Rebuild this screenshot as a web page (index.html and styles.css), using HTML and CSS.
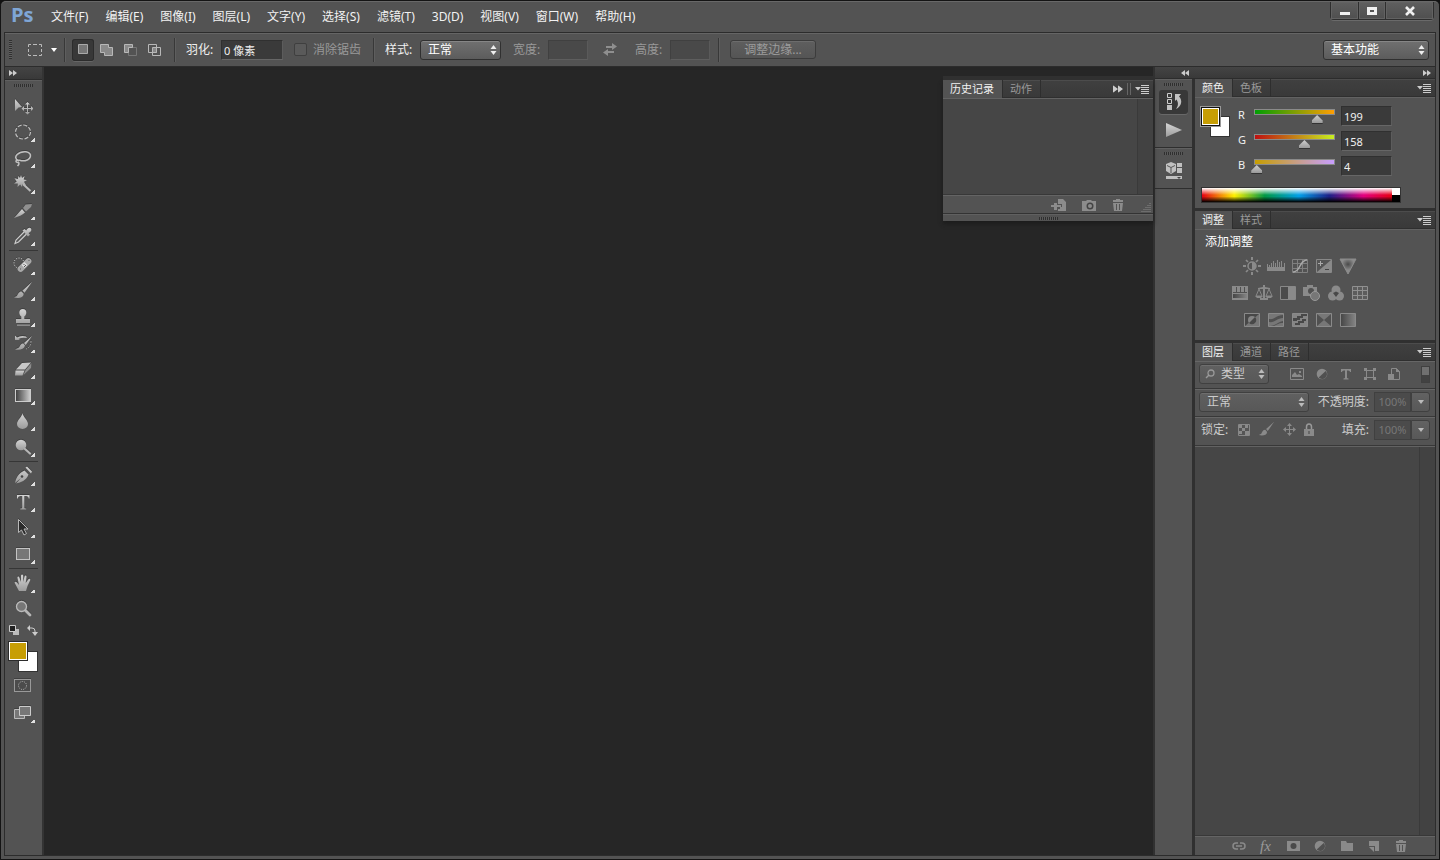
FILE: index.html
```html
<!DOCTYPE html>
<html lang="zh-CN">
<head>
<meta charset="utf-8">
<title>Ps</title>
<link rel="stylesheet" href="styles.css">
</head>
<body>
<svg class="defs" aria-hidden="true">
  <defs>
    <linearGradient id="metal" x1="0" y1="0" x2="0" y2="1"><stop offset="0" stop-color="#d4d4d4"/><stop offset="1" stop-color="#9c9c9c"/></linearGradient>
    <linearGradient id="ramp" x1="0" y1="0" x2="1" y2="0"><stop offset="0" stop-color="#3c3c3c"/><stop offset="1" stop-color="#d0d0d0"/></linearGradient>
    <linearGradient id="rampdim" x1="0" y1="0" x2="1" y2="0"><stop offset="0" stop-color="#454545"/><stop offset="1" stop-color="#858585"/></linearGradient>
    <radialGradient id="glow" cy="0.35" r="0.4"><stop offset="0" stop-color="#4a4a4a"/><stop offset="1" stop-color="#8c8c8c"/></radialGradient>
    <symbol id="updown" viewBox="0 0 7 10"><path d="M3.500 0 6.500 4H.5zM.5 6h6l-3 4z"/></symbol>
    <symbol id="fwd" viewBox="0 0 8 6"><path d="M0 0 4 3 0 6zM4 0 8 3 4 6z"/></symbol>
    <symbol id="back" viewBox="0 0 8 6"><path d="M4 0 0 3l4 3zM8 0 4 3l4 3z"/></symbol>
    <symbol id="flyout" viewBox="0 0 14 9"><path d="M0 2h6L3 5.500zM6 0h8v1H6zM6 2h8v1H6zM6 4h8v1H6zM6 6h8v1H6zM6 8h8v1H6z"/></symbol>
    <symbol id="down" viewBox="0 0 6 4"><path d="M0 0h6L3 4z"/></symbol>
    <symbol id="trash" viewBox="0 0 14 14"><path d="M5 1h4v1h3v2H2V2h3zM2 5h10l-1 8H3z"/><path d="M5.500 6v6M8.500 6v6" stroke="#535353" fill="none"/></symbol>
    <symbol id="half" viewBox="0 0 12 12"><circle cx="6" cy="6" r="5.300"/><path d="M2.700 9.500A4.500 4.500 0 0 0 9.700 3z" fill="#505050"/></symbol>
    <symbol id="brush" viewBox="0 0 20 20"><path d="M19 1 9.500 9.500l2 2.200zM8.600 10.400c-3 0-3.400 2.400-4.800 4.600L1 16.600c4.500.9 9.400.4 9.700-3.800z"/></symbol>
  </defs>
</svg>

<div class="app">
  <header class="titlebar">
    <div class="logo">Ps</div>
    <nav class="menu">
      <a href="#">文件(F)</a><a href="#">编辑(E)</a><a href="#">图像(I)</a><a href="#">图层(L)</a><a href="#">文字(Y)</a><a href="#">选择(S)</a><a href="#">滤镜(T)</a><a href="#">3D(D)</a><a href="#">视图(V)</a><a href="#">窗口(W)</a><a href="#">帮助(H)</a>
    </nav>
    <div class="winbtns">
      <button type="button" aria-label="最小化"><svg width="12" height="10"><path d="M1 6h10v3H1z"/></svg></button>
      <button type="button" aria-label="最大化"><svg width="12" height="10"><path d="M1 1h10v8H1zM4 4v2h4V4z" fill-rule="evenodd"/></svg></button>
      <button type="button" class="close" aria-label="关闭"><svg width="12" height="10"><path d="m2 1 8 8M10 1 2 9" stroke="#f0f0f0" stroke-width="2.600"/></svg></button>
    </div>
  </header>

  <div class="frame">
    <div class="options">
      <span class="vgrip"></span>
      <button type="button" class="preset" aria-label="矩形选框工具">
        <svg width="16" height="14"><path d="M1.500 4V1.500H4M6 1.500h4M12 1.500h2.500V4M14.500 6v3M14.500 11v1.500H12M10 12.500H6M4 12.500H1.500V11M1.500 9V6" stroke="#bbb" fill="none"/></svg>
        <svg class="lit" width="6" height="4"><use href="#down"/></svg>
      </button>
      <span class="sep first"></span>
      <div class="modes">
        <button type="button" class="on" aria-label="新选区"><svg width="14" height="14"><path d="M2.500 1.500h9v9h-9z" fill="#777" stroke="#aaa"/></svg></button>
        <button type="button" aria-label="添加到选区"><svg width="14" height="14"><path d="M.5 1.500h8v3h4v8h-8v-3h-4z" fill="#8a8a8a" stroke="#b8b8b8"/></svg></button>
        <button type="button" aria-label="从选区减去"><svg width="14" height="14"><path d="M4.500 4.500h8v8h-8z" fill="none" stroke="#777"/><path d="M.5 1.500h8v3h-4v5h-4z" fill="#8a8a8a" stroke="#b8b8b8"/></svg></button>
        <button type="button" aria-label="与选区交叉"><svg width="14" height="14"><path d="M4 5h5v5H4z" fill="#888"/><path d="M.5 1.500h8v8h-8zM4.500 4.500h8v8h-8z" fill="none" stroke="#b8b8b8"/></svg></button>
      </div>
      <span class="sep near"></span>
      <label class="lbl" for="feather">羽化:</label>
      <input class="field feather" id="feather" type="text" value="0 像素">
      <input class="check" id="alias" type="checkbox" disabled>
      <label class="off" for="alias">消除锯齿</label>
      <span class="sep tail-sep"></span>
      <label class="lbl" for="mode">样式:</label>
      <span class="pick mode"><select id="mode"><option>正常</option></select><svg width="7" height="10"><use href="#updown"/></svg></span>
      <label class="lbl off wide" for="w">宽度:</label>
      <input class="field size" id="w" type="text" disabled>
      <button type="button" class="swapwh" aria-label="交换宽高" disabled><svg width="14" height="13"><path d="M3 3h6V0l5 3.500L9 7V5H3zM11 8H5V6L0 9.500 5 13v-3h6z"/></svg></button>
      <label class="lbl off" for="h">高度:</label>
      <input class="field size" id="h" type="text" disabled>
      <span class="sep near"></span>
      <button type="button" class="refine" disabled>调整边缘...</button>
      <span class="pick workspace-pick"><select aria-label="工作区"><option>基本功能</option></select><svg width="7" height="10"><use href="#updown"/></svg></span>
    </div>

    <div class="workspace">
      <aside class="toolbar">
        <div class="strip"><button type="button" aria-label="展开"><svg width="8" height="6"><use href="#fwd"/></svg></button></div>
        <div class="tools">
          <span class="grip"></span>
          <button type="button" class="solo" aria-label="移动"><svg viewBox="0 0 20 20"><path d="M2 3v12l3.500-3.500L9 11z"/><path d="M14.500 6 17 8.500h-2V12h3v-2l2.500 2.500L18 15v-2h-3v3h2l-2.500 2.500L12 16h2v-3h-3v2l-2.500-2.500L11 10v2h3V8.500h-2z"/></svg></button>
          <button type="button" aria-label="椭圆选框"><svg viewBox="0 0 20 20"><ellipse cx="10" cy="10" rx="7.500" ry="7" fill="none" stroke="#c0c0c0" stroke-width="1.200" stroke-dasharray="4 1.700"/></svg></button>
          <button type="button" aria-label="套索"><svg viewBox="0 0 20 20"><path d="M5 12.500C-1 9 6 3 13 3.800c7 .7 6 9.200-4.500 9-2-.2-4-1.500-5-.5-1.500 1.500 1 3 2.500 1.500M5 14c2 1 .5 3-.5 4" fill="none" stroke="#c0c0c0" stroke-width="1.600"/></svg></button>
          <button type="button" aria-label="魔棒"><svg viewBox="0 0 20 20"><path d="m8 1 1 3 2.500-2-.8 3.500L14 6l-3 1.700L13 11l-3.500-1L9 13l-1.800-2.500L4.500 13l.3-3.400L1 9.500l2.700-2L1.500 4.300 5 5l.3-3L7 4z"/><path d="m10 10 7.500 7" stroke="#b8b8b8" stroke-width="2.200"/></svg></button>
          <button type="button" aria-label="切片"><svg viewBox="0 0 20 20"><path d="M1 18 9 9l3 3.500c-3 2.500-6 4-11 5.500z"/><path d="m10 8 2.500-3.500L19 4l-1 3-5 4.500z" fill="#909090"/></svg></button>
          <button type="button" aria-label="吸管"><svg viewBox="0 0 20 20"><path d="m11 6-8 8-1 3.500L5.500 16l8-8" fill="#555" stroke="#ccc" stroke-width="1.200"/><path d="m9.500 4.500 2-1.500 1.800 1.500C14.500 1.500 17 1 18 2.500s0 3.500-2.500 4.500L17 8.800l-2 1.700z"/></svg></button>
          <span class="rule"></span>
          <button type="button" aria-label="修复画笔"><svg viewBox="0 0 20 20"><circle cx="6" cy="8" r="5" fill="none" stroke="#ddd" stroke-dasharray="1 1.500"/><rect x="3" y="7" width="17" height="6" rx="3" transform="rotate(-45 11.500 10)" fill="#a8a8a8"/><path d="m8.500 10 3-3 3 3-3 3z" fill="#ddd"/><path d="M10.500 9.500h1M12 10.500h1M11 11.500h1M7 14h1M15.500 5.500h1" stroke="#555"/></svg></button>
          <button type="button" aria-label="画笔"><svg viewBox="0 0 20 20"><use href="#brush"/></svg></button>
          <button type="button" aria-label="图章"><svg viewBox="0 0 20 20"><path d="M8.300 9.500C6.500 8 6.300 6.500 6.300 5.500a3.500 3.500 0 0 1 7 0c0 1-.2 2.500-2 4V12H17v4H3v-4h5.300zM4 17.500h13v1.200H4z"/></svg></button>
          <button type="button" aria-label="历史记录画笔"><svg viewBox="0 0 20 20"><path d="m19 3-8 7 1.700 2zM10.500 10.500c-3 0-3 2-4.500 4l-4 2c4.500 1 9 0 10-4z"/><path d="M2 7V2.500L4 4.500Q8 2 13 3.500L14 5Q9 4 5.500 6L7 7z"/><path d="M18 8q0 6-5 8" fill="none" stroke="#aaa" stroke-dasharray="1.500 1.500"/></svg></button>
          <button type="button" aria-label="橡皮擦"><svg viewBox="0 0 20 20"><path d="m9 4 9-.5-6 7H3z" fill="#c8c8c8"/><path d="M2.500 11.500h9l-2 5H2z"/><path d="m12.500 11 6-7-.5 5-7.500 7z" fill="#8c8c8c"/></svg></button>
          <button type="button" aria-label="渐变"><svg viewBox="0 0 20 20"><rect x="2.500" y="4.500" width="15" height="12" fill="url(#ramp)" stroke="#ccc"/></svg></button>
          <button type="button" aria-label="模糊"><svg viewBox="0 0 20 20"><path d="M9.500 2c.5 4 5.500 7 5.500 11a5.500 5 0 0 1-11 0C4 9 9 6 9.500 2z"/></svg></button>
          <button type="button" aria-label="减淡"><svg viewBox="0 0 20 20"><circle cx="8" cy="8" r="5.300"/><path d="m12 12 5 4.500" stroke="#b5b5b5" stroke-width="2.200" stroke-linecap="round"/></svg></button>
          <span class="rule"></span>
          <button type="button" aria-label="钢笔"><svg viewBox="0 0 20 20"><path d="m12.500 1.500 1.500-1 5 5-1 2zM2 17C3 12 5 7.500 11.500 4.500l4 4C13 15 8 16 3 17.500L8 12z"/><circle cx="9" cy="10.500" r="1.300" fill="#444"/></svg></button>
          <button type="button" aria-label="横排文字"><svg viewBox="0 0 20 20"><path d="M4 3h12.500v3.500h-.8C15.500 4.600 14.500 4 11.300 4v11c0 1.200.4 1.500 1.900 1.500v1H7.300v-1c1.500 0 1.900-.3 1.900-1.500V4C6 4 5 4.600 4.800 6.500H4z"/></svg></button>
          <button type="button" aria-label="路径选择"><svg viewBox="0 0 20 20"><path d="M5.500 1.500v13l3-2.500 2.500 5 2.500-1.500-2.500-4.500h4z" fill="#2b2b2b" stroke="#b8b8b8"/></svg></button>
          <button type="button" aria-label="矩形"><svg viewBox="0 0 20 20"><rect x="3.500" y="4.500" width="13" height="11" fill="#777" stroke="#c4c4c4"/></svg></button>
          <span class="rule"></span>
          <button type="button" aria-label="抓手"><svg viewBox="0 0 20 20"><path d="M6 18 2 10.500C.8 8.500 2.800 8 4 9.500L6 12 4.500 5C4 3 6 3 6.500 4.700L8 9V3c0-2 2.200-2 2.200 0v6l1.300-5.500c.5-1.800 2.300-1.200 2 .6L12.700 10l2.500-3.500c1-1.500 2.600-.6 1.900 1L14.500 13 13 18z"/></svg></button>
          <button type="button" class="solo" aria-label="缩放"><svg viewBox="0 0 20 20"><path d="m12.500 11.500 4.500 4.500" stroke="#b5b5b5" stroke-width="2.800" stroke-linecap="round"/><circle cx="8.500" cy="7.500" r="5" fill="#777" stroke="#bbb" stroke-width="1.300"/></svg></button>
          <div class="mini">
            <button type="button" aria-label="默认颜色"><svg width="11" height="11"><path d="M4 4h6v6H4z" fill="#bbb"/><path d="M.5.5h6v6h-6z" fill="#222" stroke="#ccc"/></svg></button>
            <button type="button" aria-label="切换颜色"><svg width="11" height="11"><path d="M2 3h3q3 0 3 3v2" fill="none" stroke="#ccc"/><path d="M3 0v6L0 3zM5 7h6l-3 4z" fill="#ccc"/></svg></button>
          </div>
          <div class="swatches large"><button type="button" class="fg" aria-label="前景色"></button><button type="button" class="bg" aria-label="背景色"></button></div>
          <button type="button" class="solo mask" aria-label="快速蒙版"><svg viewBox="0 0 20 20"><rect x="1.500" y="3.500" width="16" height="12" fill="#4c4c4c" stroke="#999"/><circle cx="9.500" cy="9.500" r="4" fill="none" stroke="#bbb" stroke-dasharray="1 1.200"/></svg></button>
          <button type="button" aria-label="屏幕模式"><svg viewBox="0 0 20 20"><path d="M1.500 6.500h10v9h-10z" fill="#777" stroke="#bbb"/><path d="M6.500 3.500h11v9h-11z" fill="#777" stroke="#ccc"/></svg></button>
        </div>
      </aside>

      <main class="canvas">
        <section class="history">
          <div class="tabs">
            <button type="button" class="tab on">历史记录</button><button type="button" class="tab">动作</button>
            <span class="tail"><svg width="10" height="8" viewBox="0 0 8 6"><use href="#fwd"/></svg><i></i><svg width="14" height="9"><use href="#flyout"/></svg></span>
          </div>
          <div class="list"></div>
          <div class="histfoot">
            <button type="button" aria-label="从当前状态创建新文档"><svg width="16" height="14"><path d="M7 1h5l3 3v9H7v-2h2V9h2V6H7zM3 5h3v2h4v2H6v3H3V9H0V7h3z"/></svg></button>
            <button type="button" aria-label="创建新快照"><svg width="16" height="14"><path d="M1 3h4l1-1h4l1 1h4v10H1z"/><circle cx="9" cy="8" r="3.500" fill="#444"/><circle cx="9" cy="8" r="2"/></svg></button>
            <button type="button" aria-label="删除当前状态"><svg width="14" height="14"><use href="#trash"/></svg></button>
            <svg class="resize" width="10" height="10"><path d="M9 0v10M7 2v8M5 4v6M3 6v4M1 8v2" stroke="#888" stroke-dasharray="1 1" fill="none"/></svg>
          </div>
          <div class="handle"><span class="grip"></span></div>
        </section>
      </main>

      <aside class="side">
        <div class="strip both">
          <button type="button" aria-label="展开面板"><svg width="8" height="6"><use href="#back"/></svg></button>
          <button type="button" aria-label="折叠面板"><svg width="8" height="6"><use href="#fwd"/></svg></button>
        </div>
        <div class="columns">
          <div class="dock">
            <div class="dockgroup">
              <span class="grip"></span>
              <button type="button" class="on" aria-label="历史记录面板"><svg width="18" height="18"><path d="M2.500.5h4v4h-4zM2.500 6.500h4v4h-4z" fill="none" stroke="#ccc"/><path d="M2 12h5v5H2zM10 1h6l-2 2.500c4 4 2.500 10-3 12.500 3-4 2-7 .5-9.500L10 8z"/></svg></button>
              <button type="button" aria-label="动作面板"><svg width="18" height="18"><path d="M1 2v14l16-7z" fill="url(#metal)"/></svg></button>
            </div>
            <div class="dockgroup">
              <span class="grip"></span>
              <button type="button" aria-label="属性面板"><svg width="18" height="18"><path d="m6 0 5 2v7l-5 3-5-3V2z"/><path d="m2 3.500 4 2 4-2M6 5.500V11" stroke="#555" fill="none"/><path d="M12 1h5v4h-5zM12 6h5v5h-5zM1 14h16v3H1z"/><path d="M12 15h4l-2 2z" fill="#444"/></svg></button>
            </div>
          </div>

          <div class="panels">
            <section class="panel color">
              <div class="tabs"><button type="button" class="tab on">颜色</button><button type="button" class="tab">色板</button><span class="tail"><svg width="14" height="9"><use href="#flyout"/></svg></span></div>
              <div class="body">
                <div class="mixer">
                  <div class="swatches"><button type="button" class="fg" aria-label="前景色"></button><button type="button" class="bg" aria-label="背景色"></button></div>
                  <div class="channels">
                    <div class="channel"><label for="r">R</label><div class="slide"><div class="bar red"></div><input id="r" type="range" min="0" max="255" value="199"></div><input class="field" type="text" value="199" aria-label="R 值"></div>
                    <div class="channel"><label for="g">G</label><div class="slide"><div class="bar green"></div><input id="g" type="range" min="0" max="255" value="158"></div><input class="field" type="text" value="158" aria-label="G 值"></div>
                    <div class="channel"><label for="b">B</label><div class="slide"><div class="bar blue"></div><input id="b" type="range" min="0" max="255" value="4"></div><input class="field" type="text" value="4" aria-label="B 值"></div>
                  </div>
                </div>
                <div class="spectrum"><div class="hues"></div><div class="bw"></div></div>
              </div>
            </section>

            <section class="panel adjust">
              <div class="tabs"><button type="button" class="tab on">调整</button><button type="button" class="tab">样式</button><span class="tail"><svg width="14" height="9"><use href="#flyout"/></svg></span></div>
              <div class="body">
                <div class="title">添加调整</div>
                <div class="presets">
                  <button type="button" aria-label="亮度/对比度"><svg viewBox="0 0 18 18"><circle cx="9" cy="9" r="4" fill="none" stroke="#8a8a8a" stroke-width="1.500"/><path d="M9 5a4 4 0 0 1 0 8zM8 0h2v3H8zM8 15h2v3H8zM0 8h3v2H0zM15 8h3v2h-3z"/><path d="m3 3 2 2M13 13l2 2M3 15l2-2M13 5l2-2" stroke="#8a8a8a" stroke-width="1.700"/></svg></button>
                  <button type="button" aria-label="色阶"><svg viewBox="0 0 18 18"><path d="M0 10h18v4H0z"/><path d="M.5 7v4M2.500 8v3M4.500 6v5M6.500 4v7M8.500 6v5M10.500 3v8M12.500 5v6M14.500 4v7M17.500 6v5" stroke="#8a8a8a"/></svg></button>
                  <button type="button" aria-label="曲线"><svg viewBox="0 0 18 18"><path d="M1.500 2.500h15v13h-15zM6.500 2.500v13M11.500 2.500v13M1.500 6.500h15M1.500 11.500h15" fill="none" stroke="#808080"/><path d="M2 15c8 0 6-12 14-12" fill="none" stroke="#aaa" stroke-width="1.500"/></svg></button>
                  <button type="button" aria-label="曝光度"><svg viewBox="0 0 18 18"><path d="M1.500 2.500h15v13h-15z" fill="#555" stroke="#888"/><path d="M2 15 16 3v12z"/><path d="M5.500 4v5M3 6.500h5" stroke="#aaa"/><path d="M10 12.500h4" stroke="#444"/></svg></button>
                  <button type="button" aria-label="自然饱和度"><svg viewBox="0 0 18 18"><path d="M1 2h16L9 17z" fill="url(#glow)" stroke="#8c8c8c"/></svg></button>
                </div>
                <div class="presets">
                  <button type="button" aria-label="色相/饱和度"><svg viewBox="0 0 18 18"><path d="M1 2h16v14H1z"/><path d="M5.500 3v5M9.500 3v5M13.500 3v5M2 8.500h14" stroke="#505050"/><path d="M2 10h14v4H2z" fill="url(#rampdim)"/></svg></button>
                  <button type="button" aria-label="色彩平衡"><svg viewBox="0 0 18 18"><path d="M8 1h2v2l5 1v1h-5v9h3v2H5v-2h3V5H3V4l5-1z"/><path d="M4 5 1 12h6zM14 5l-3 7h6z" fill="none" stroke="#888"/><path d="M0 12h8l-2 2H2zM10 12h8l-2 2h-4z"/></svg></button>
                  <button type="button" aria-label="黑白"><svg viewBox="0 0 18 18"><path d="M1.500 2.500h15v13h-15z" fill="#4b4b4b" stroke="#888"/><path d="M9 3h7v12H9z"/></svg></button>
                  <button type="button" aria-label="照片滤镜"><svg viewBox="0 0 18 18"><path d="M0 3h4V1h6v2h4v9H0z"/><circle cx="8" cy="7" r="3" fill="#505050"/><circle cx="12" cy="12" r="4.500" fill="#777" stroke="#999"/></svg></button>
                  <button type="button" aria-label="通道混合器"><svg viewBox="0 0 18 18"><circle cx="9" cy="6" r="4.500"/><circle cx="5.500" cy="12" r="4.500"/><circle cx="12.500" cy="12" r="4.500"/><path d="m6 9 3-1.500L12 9l-3 4z" fill="#484848"/></svg></button>
                  <button type="button" aria-label="颜色查找"><svg viewBox="0 0 18 18"><path d="M1.500 2.500h15v13h-15z" fill="#5c5c5c"/><path d="M1.500 2.500h15v13h-15zM6.500 2.500v13M11.500 2.500v13M1.500 6.500h15M1.500 11.500h15" fill="none" stroke="#909090"/></svg></button>
                </div>
                <div class="presets">
                  <button type="button" aria-label="反相"><svg viewBox="0 0 18 18"><path d="M1.500 2.500h15v13h-15z" fill="#777" stroke="#8a8a8a"/><path d="M2 15 16 3H2z" fill="#484848"/><circle cx="9" cy="9" r="4" fill="#858585"/><path d="M12 6a4 4 0 0 1-6 6z" fill="#484848"/></svg></button>
                  <button type="button" aria-label="色调分离"><svg viewBox="0 0 18 18"><path d="M1.500 2.500h15v13h-15z" fill="#777" stroke="#8a8a8a"/><path d="M2 8c6 1 7-4 14-4v3c-6 0-8 5-14 4zM2 15c7 0 8-4 14-5v2c-5 0-6 2-9 3z" fill="#505050"/></svg></button>
                  <button type="button" aria-label="阈值"><svg viewBox="0 0 18 18"><path d="M1.500 2.500h15v13h-15z" fill="#858585" stroke="#8a8a8a"/><path d="M2 9V7h4V5h4V3h6v2h-4v2H9v2H6v1H2zM4 14v-2h3v-2h4V8h4v2h-2v2h-4v2z" fill="#484848"/></svg></button>
                  <button type="button" aria-label="可选颜色"><svg viewBox="0 0 18 18"><path d="M1.500 2.500h15v13h-15z" fill="#777" stroke="#8a8a8a"/><path d="m2 3 7 6-7 6zM16 3 9 9l7 6z" fill="#505050"/></svg></button>
                  <button type="button" aria-label="渐变映射"><svg viewBox="0 0 18 18"><path d="M1.500 2.500h15v13h-15z" fill="url(#rampdim)" stroke="#8a8a8a"/></svg></button>
                </div>
              </div>
            </section>

            <section class="panel layers">
              <div class="tabs"><button type="button" class="tab on">图层</button><button type="button" class="tab">通道</button><button type="button" class="tab">路径</button><span class="tail"><svg width="14" height="9"><use href="#flyout"/></svg></span></div>
              <div class="layerrow">
                <span class="pick dim kind"><svg class="lens" width="10" height="10"><circle cx="6" cy="4" r="3" fill="none" stroke="#999" stroke-width="1.300"/><path d="M4 6 1 9" stroke="#999" stroke-width="1.500"/></svg><select aria-label="筛选类型"><option>类型</option></select><svg width="7" height="10"><use href="#updown"/></svg></span>
                <div class="filters">
                  <button type="button" aria-label="像素图层"><svg width="14" height="12"><path d="M.5.500h13v11H.5z" fill="none" stroke="#8a8a8a"/><path d="M2 9V7l3-3 2 3 2-1 3 2v1z"/><path d="M9 3h2v2H9z"/></svg></button>
                  <button type="button" aria-label="调整图层"><svg width="12" height="12"><use href="#half"/></svg></button>
                  <button type="button" aria-label="文字图层"><svg width="12" height="12"><path d="M1 1h10v3h-1c0-1-1-1.500-3-1.500V10l1.500.5v1h-5v-1L5 10V2.500C3 2.500 2 3 2 4H1z"/></svg></button>
                  <button type="button" aria-label="形状图层"><svg width="12" height="12"><path d="M2.500 2.500h7v7h-7z" fill="none" stroke="#8a8a8a"/><path d="M0 0h3v3H0zM9 0h3v3H9zM0 9h3v3H0zM9 9h3v3H9z"/></svg></button>
                  <button type="button" aria-label="智能对象"><svg width="12" height="13"><path d="M3.500 6V.5h5l3 3v8H6" fill="none" stroke="#8a8a8a"/><path d="M8 0v4h4zM0 6h6v6H0z"/></svg></button>
                </div>
                <button type="button" class="switch" aria-label="打开或关闭图层过滤"></button>
              </div>
              <div class="layerrow">
                <span class="pick dim blend"><select aria-label="混合模式"><option>正常</option></select><svg width="7" height="10"><use href="#updown"/></svg></span>
                <label class="push" for="opacity">不透明度:</label>
                <span class="percent"><input id="opacity" type="text" value="100%" disabled><button type="button" aria-label="不透明度滑块"><svg width="6" height="4"><use href="#down"/></svg></button></span>
              </div>
              <div class="layerrow last">
                <span class="lock">锁定:</span>
                <div class="locks">
                  <button type="button" aria-label="锁定透明像素"><svg width="12" height="12"><path d="M.5.5h11v11H.5z" fill="#555" stroke="#888"/><path d="M1 1h3v3H1zM7 1h3v3H7zM4 4h3v3H4zM1 7h3v3H1zM7 7h4v4H7z"/></svg></button>
                  <button type="button" aria-label="锁定图像像素"><svg width="17" height="17" viewBox="0 0 20 20"><use href="#brush"/></svg></button>
                  <button type="button" aria-label="锁定位置"><svg width="13" height="13"><path d="M6.500 0 9 3H7v3h3V4l3 2.500L10 9V7H7v3h2l-2.500 3L4 10h2V7H3v2L0 6.500 3 4v2h3V3H4z"/></svg></button>
                  <button type="button" aria-label="锁定全部"><svg width="10" height="13"><path d="M2.500 6V4a2.500 3 0 0 1 5 0v2" fill="none" stroke="#999" stroke-width="1.500"/><path d="M0 6h10v7H0z"/><path d="M4.500 8h1v3h-1z" fill="#444"/></svg></button>
                </div>
                <label class="push" for="fill">填充:</label>
                <span class="percent"><input id="fill" type="text" value="100%" disabled><button type="button" aria-label="填充滑块"><svg width="6" height="4"><use href="#down"/></svg></button></span>
              </div>
              <div class="list"></div>
              <div class="layerfoot">
                <button type="button" aria-label="链接图层"><svg width="14" height="14"><path d="M6 4H4a3 3 0 0 0 0 6h2M8 4h2a3 3 0 0 1 0 6H8M4 7h6" fill="none" stroke="#8a8a8a" stroke-width="1.500"/></svg></button>
                <button type="button" class="fx" aria-label="图层样式">fx</button>
                <button type="button" aria-label="图层蒙版"><svg width="14" height="14"><path d="M1 2h13v10H1z"/><circle cx="7.500" cy="7" r="3" fill="#4a4a4a"/></svg></button>
                <button type="button" aria-label="新调整图层"><svg width="12" height="12"><use href="#half"/></svg></button>
                <button type="button" aria-label="新建组"><svg width="14" height="14"><path d="M1 2h5l1 2h6v8H1z"/></svg></button>
                <button type="button" aria-label="新建图层"><svg width="14" height="14"><path d="M2 2h10v10H8V7H2zM2 8h5v5z"/></svg></button>
                <button type="button" aria-label="删除图层"><svg width="14" height="14"><use href="#trash"/></svg></button>
              </div>
            </section>
          </div>
        </div>
      </aside>
    </div>
  </div>
</div>
</body>
</html>
```
FILE: styles.css
```css
* { box-sizing: border-box; }

html, body { height: 100%; }

body {
  margin: 0;
  background: #111;
  color: #f0f0f0;
  font: 12px/16px "Noto Sans", "Noto Sans CJK SC", sans-serif;
}

button, input, select {
  margin: 0;
  padding: 0;
  border: 0;
  background: none;
  color: inherit;
  font: inherit;
}

button {
  display: flex;
  align-items: center;
  justify-content: center;
  flex: none;
}

svg { display: block; flex: none; fill: #c0c0c0; }
.defs { position: absolute; width: 0; height: 0; }

.app {
  display: flex;
  flex-direction: column;
  min-height: 100vh;
  background: #535353;
  border: 1px solid #141414;
  border-radius: 6px 6px 0 0;
}

/* Title bar */
.titlebar {
  display: flex;
  align-items: center;
  height: 31px;
  padding: 0 5px 0 10px;
  border-top: 1px solid #686868;
  border-radius: 5px 5px 0 0;
}
.logo {
  width: 40px;
  padding-bottom: 4px;
  color: #7fa6d6;
  font: bold 20px/24px "Open Sans", sans-serif;
}
.menu { display: flex; gap: 17px; }
.menu a { color: #f2f2f2; text-decoration: none; white-space: nowrap; }
.winbtns {
  display: flex;
  align-self: flex-start;
  margin-left: auto;
  border: 1px solid #2e2e2e;
  border-top: 0;
  border-radius: 0 0 4px 4px;
  box-shadow: 0 1px 0 #6a6a6a;
}
.winbtns button {
  width: 27px;
  height: 17px;
  background: linear-gradient(#5f5f5f, #4f4f4f);
  box-shadow: inset 0 0 0 1px #626262;
}
.winbtns button + button { border-left: 1px solid #2e2e2e; }
.winbtns .close { width: 48px; }
.winbtns svg { fill: #f0f0f0; }

.frame {
  display: flex;
  flex: 1;
  flex-direction: column;
  margin: 0 3px 3px;
  border: 1px solid #2c2c2c;
}

/* Options bar */
.options {
  display: flex;
  align-items: center;
  height: 34px;
  padding: 0 6px 0 4px;
  border-bottom: 1px solid #2c2c2c;
  box-shadow: inset 0 1px 0 #656565;
  white-space: nowrap;
}
.vgrip {
  width: 3px;
  height: 19px;
  margin-right: 8px;
  background: repeating-linear-gradient(#303030 0 1px, #606060 1px 2px);
}
.preset { gap: 8px; padding: 0 5px 0 7px; }
.lit { fill: #fff; }
.sep {
  width: 2px;
  height: 24px;
  margin: 0 10px;
  background: linear-gradient(90deg, #383838 50%, #5e5e5e 50%);
}
.sep.first { margin: 0 6px 0 2px; }
.sep.near { margin-left: 8px; }
.sep.tail-sep { margin-left: 12px; }
.modes { display: flex; gap: 2px; }
.modes button { width: 22px; height: 22px; border-radius: 3px; }
.modes .on { background: #383838; box-shadow: inset 0 0 0 1px #2c2c2c, 0 1px 0 #666; }
.lbl { width: 28px; margin-right: 7px; }
.off { color: #999; }
.wide { margin-left: 12px; }

.field {
  height: 20px;
  padding: 0 2px;
  background: #3a3a3a;
  border: 1px solid #303030;
  border-bottom-color: #666;
  border-right-color: #5c5c5c;
}
.field:disabled { background: #494949; border-color: #404040 #5a5a5a #5e5e5e #404040; }
.feather { width: 62px; margin-right: 11px; font-size: 11px; }
.size { width: 40px; }
.check {
  width: 13px;
  height: 13px;
  margin-right: 6px;
  appearance: none;
  background: #5a5a5a;
  border: 1px solid #3f3f3f;
  border-radius: 2px;
}
.swapwh { margin: 0 18px 0 15px; }
.swapwh svg { fill: #8f8f8f; }
.refine {
  width: 86px;
  height: 19px;
  background: linear-gradient(#5e5e5e, #555);
  border: 1px solid #3c3c3c;
  border-radius: 3px;
  box-shadow: inset 0 1px 0 #6c6c6c;
  color: #9c9c9c;
}

.pick { position: relative; display: flex; height: 20px; }
.pick select {
  width: 100%;
  padding: 0 16px 0 7px;
  appearance: none;
  background: linear-gradient(#707070, #5c5c5c);
  border: 1px solid #303030;
  border-radius: 3px;
  box-shadow: inset 0 1px 0 #868686;
  color: #fff;
  line-height: 16px;
}
.pick > svg { position: absolute; top: 5px; right: 4px; fill: #eee; pointer-events: none; }
.mode { width: 81px; }
.workspace-pick { width: 106px; margin-left: auto; }
.dim select {
  background: linear-gradient(#606060, #585858);
  border-color: #404040;
  box-shadow: inset 0 1px 0 #6e6e6e;
  color: #ccc;
}

/* Workspace */
.workspace { display: flex; flex: 1; }
.strip {
  display: flex;
  align-items: center;
  height: 13px;
  padding: 0 4px;
  background: linear-gradient(#444, #393939);
  border-bottom: 1px solid #2c2c2c;
}
.strip svg { fill: #ccc; }
.grip {
  width: 19px;
  height: 3px;
  background: repeating-linear-gradient(90deg, #2f2f2f 0 1px, #5a5a5a 1px 2px);
}

.toolbar {
  width: 39px;
  border-right: 2px solid #343434;
}
.tools {
  display: flex;
  flex-direction: column;
  align-items: center;
  padding: 3px 1px 0 0;
  border-top: 1px solid #606060;
}
.tools > .grip { margin-bottom: 6px; }
.tools > button { position: relative; width: 36px; height: 26px; }
.tools > button svg {
  width: 20px;
  height: 20px;
  fill: url(#metal);
  filter: drop-shadow(0 -1px 0 #404040);
}
.tools > button::after {
  content: "";
  position: absolute;
  right: 6px;
  bottom: 3px;
  width: 4px;
  height: 4px;
  background: linear-gradient(135deg, transparent 50%, #e0e0e0 50%);
}
.tools > .solo::after { content: none; }
.rule {
  width: 29px;
  height: 1px;
  margin: 1px 0;
  background: #363636;
}
.mini { display: flex; gap: 7px; margin: 3px 0 5px; }

.swatches { position: relative; width: 30px; height: 31px; }
.swatches button {
  position: absolute;
  width: 20px;
  height: 21px;
  border: 1px solid #333;
}
.swatches .fg {
  z-index: 1;
  top: 0;
  left: 0;
  width: 21px;
  background: #c79e04;
  border-color: #999;
  box-shadow: inset 0 0 0 1px #111, inset 0 0 0 2px #fff;
}
.swatches .bg { right: 0; bottom: 0; background: #fff; }
.large .fg {
  width: 20px;
  height: 20px;
  border-color: #2c2c2c;
  box-shadow: inset 0 0 0 1px #fff;
}
.tools > .mask { margin: 1px 0; }

.canvas { position: relative; flex: 1; min-width: 0; background: #262626; }

/* Floating history panel */
.history {
  position: absolute;
  top: 13px;
  right: 0;
  display: flex;
  flex-direction: column;
  width: 210px;
  background: #535353;
  box-shadow: 0 -4px 0 #303030, 0 3px 4px #1c1c1c;
}
.history .list { height: 97px; }
.tabs {
  display: flex;
  height: 18px;
  background: linear-gradient(#404040, #393939);
  box-shadow: inset 0 1px 0 #4c4c4c, inset 0 -1px 0 #2f2f2f;
}
.tab {
  padding: 0 8px 0 7px;
  border-right: 1px solid #2e2e2e;
  color: #999;
  font-size: 11px;
}
.tab.on { background: #535353; color: #f0f0f0; }
.tail { display: flex; align-items: center; gap: 4px; margin-left: auto; padding-right: 4px; }
.tail svg { fill: #ccc; }
.tail i { width: 4px; height: 12px; border: solid #666; border-width: 0 1px; }
.list {
  border-top: 1px solid #626262;
  border-bottom: 1px solid #383838;
  background: linear-gradient(#3a3a3a, #3a3a3a) right 15px top / 1px 100% no-repeat,
    linear-gradient(#424242, #424242) right / 15px 100% no-repeat, #464646;
}
.histfoot {
  display: flex;
  align-items: center;
  justify-content: flex-end;
  gap: 14px;
  height: 19px;
  border-top: 1px solid #646464;
  border-bottom: 1px solid #333;
}
.histfoot svg { fill: #8c8c8c; }
.histfoot .resize { align-self: flex-end; margin: 0 2px; }
.handle { display: flex; align-items: center; justify-content: center; height: 7px; border-top: 1px solid #606060; }

/* Right side */
.side {
  display: flex;
  flex-direction: column;
  width: 282px;
  border-left: 2px solid #313131;
}
.side .strip { height: 12px; }
.both { display: grid; grid-template-columns: 30px 1fr; }
.both button { justify-content: flex-end; }
.columns { display: flex; flex: 1; }
.dock { width: 40px; border-right: 3px solid #303030; }
.dockgroup {
  display: flex;
  flex-direction: column;
  align-items: center;
  padding: 3px 0 5px;
  border-top: 1px solid #606060;
  border-bottom: 1px solid #2e2e2e;
}
.dockgroup button { width: 29px; height: 24px; margin-top: 4px; border-radius: 3px; }
.dockgroup .on { background: #383838; box-shadow: 0 1px 0 #686868; }

.panels { display: flex; flex: 1; flex-direction: column; gap: 3px; background: #303030; }
.panel { background: #535353; }
.body { height: 111px; border-top: 1px solid #626262; }

.mixer { display: flex; padding: 8px 0 0 5px; }
.channels { display: flex; flex-direction: column; gap: 5px; padding-left: 8px; }
.channel { display: flex; height: 20px; }
.channel label { width: 12px; font-size: 11px; line-height: 18px; }
.channel .field { width: 51px; font-size: 11px; }
.slide { width: 91px; padding-top: 3px; }
.bar { height: 6px; margin: 0 6px 0 4px; border: 1px solid #8a8a8a; }
.red { background: linear-gradient(90deg, #009e04, #ff9e04); }
.green { background: linear-gradient(90deg, #c01010, #c7f020); }
.blue { background: linear-gradient(90deg, #c79e00, #c79eff); }
.slide input {
  display: block;
  width: 90px;
  height: 9px;
  appearance: none;
}
.slide input::-webkit-slider-thumb {
  width: 11px;
  height: 9px;
  appearance: none;
  background: linear-gradient(#d0d0d0, #999);
  border-bottom: 1px solid #333;
  clip-path: polygon(50% 0, 100% 60%, 100% 100%, 0 100%, 0 60%);
}
.spectrum {
  display: flex;
  width: 200px;
  height: 16px;
  margin: 11px 0 0 6px;
  border: 1px solid #333;
}
.hues {
  flex: 1;
  background: linear-gradient(#fff, transparent 50%, transparent 60%, #000),
    linear-gradient(90deg, #e60012, #fff100 17%, #009944 33%, #00a0e9 51%, #1d2088 67%, #e4007f 85%, #e60012);
}
.bw { width: 8px; background: linear-gradient(#fff 50%, #000 50%); }

.adjust .title { padding: 4px 10px 7px; color: #fff; }
.presets { display: flex; justify-content: center; gap: 6px; padding: 0 30px 9px 0; }
.presets svg { width: 18px; height: 18px; fill: #8a8a8a; }

.layers { display: flex; flex: 1; flex-direction: column; }
.layers svg { fill: #8a8a8a; }
.layers .tail svg { fill: #ccc; }
.layers .pick > svg { fill: #bbb; }
.layerrow {
  display: flex;
  align-items: center;
  height: 28px;
  padding: 0 5px 2px 4px;
  border-top: 1px solid #666;
  border-bottom: 1px solid #383838;
  color: #ccc;
}
.kind { width: 70px; }
.kind select { padding-left: 21px; }
.pick > .lens { right: auto; left: 6px; }
.filters { display: flex; align-items: center; gap: 12px; margin-left: 21px; }
.switch {
  width: 9px;
  height: 17px;
  margin-left: auto;
  background: linear-gradient(#707070 0 8px, #424242 8px);
  border: 1px solid #404040;
}
.blend { width: 110px; }
.push { margin-left: auto; margin-right: 5px; }
.percent { display: flex; width: 56px; height: 20px; }
.percent input {
  width: 37px;
  background: #4b4b4b;
  border: 1px solid #404040;
  color: #777;
  font-size: 11px;
  text-align: center;
}
.percent button {
  width: 19px;
  background: linear-gradient(#626262, #585858);
  border: 1px solid #404040;
  border-radius: 0 3px 3px 0;
}
.percent svg { fill: #bbb; }
.lock { width: 31px; padding-left: 2px; }
.locks { display: flex; align-items: center; gap: 8px; margin-left: 8px; }
.layerrow.last { height: 29px; padding-bottom: 4px; }
.layers .list { flex: 1; }
.layerfoot {
  display: flex;
  align-items: center;
  justify-content: flex-end;
  height: 19px;
  padding-right: 21px;
  border-top: 1px solid #646464;
}
.layerfoot button { width: 27px; height: 18px; }
.layerfoot .fx { color: #9a9a9a; font: italic 15px/16px "Liberation Serif", serif; }
```
